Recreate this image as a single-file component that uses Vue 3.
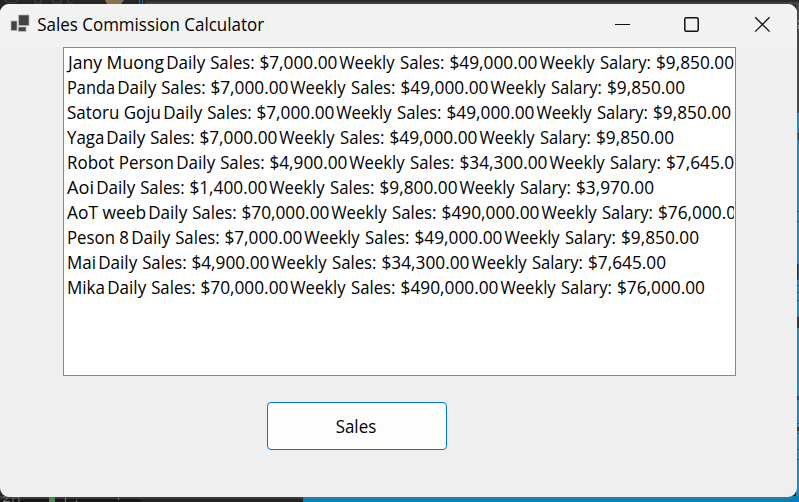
<script setup>
const people = [
  ['Jany Muong', 96, 166.2, '$7,000.00', '$49,000.00', '$9,850.00'],
  ['Panda', 48, 117.2, '$7,000.00', '$49,000.00', '$9,850.00'],
  ['Satoru Goju', 94, 163.2, '$7,000.00', '$49,000.00', '$9,850.00'],
  ['Yaga', 37.3, 106.2, '$7,000.00', '$49,000.00', '$9,850.00'],
  ['Robot Person', 107, 176.2, '$4,900.00', '$34,300.00', '$7,645.00'],
  ['Aoi', 27, 96.2, '$1,400.00', '$9,800.00', '$3,970.00'],
  ['AoT weeb', 79, 148.2, '$70,000.00', '$490,000.00', '$76,000.00'],
  ['Peson 8', 62, 131.2, '$7,000.00', '$49,000.00', '$9,850.00'],
  ['Mai', 29, 98.2, '$4,900.00', '$34,300.00', '$7,645.00'],
  ['Mika', 38, 107.2, '$70,000.00', '$490,000.00', '$76,000.00'],
]

const LEFT = 64
const amountWidth = (s) => (s.length - 2) * 10 + 8

const rows = people.map(([name, width, tab, daily, weekly, salary]) => {
  const a = tab - LEFT
  const b = a + 93.2 + amountWidth(daily) + 1.8
  const c = b + 110.3 + amountWidth(weekly) + 1.9
  return [
    { t: name, x: name[0] === 'J' ? 4 : 3, w: width },
    { t: 'Daily', x: a, w: 39 },
    { t: 'Sales:', x: a + 44, w: 44.5 },
    { t: daily, x: a + 93.2, w: amountWidth(daily) },
    { t: 'Weekly', x: b, w: 55.3 },
    { t: 'Sales:', x: b + 60.8, w: 44.5 },
    { t: weekly, x: b + 110.3, w: amountWidth(weekly) },
    { t: 'Weekly', x: c, w: 55.3 },
    { t: 'Salary:', x: c + 60.5, w: 51 },
    { t: salary, x: c + 116.6, w: amountWidth(salary) },
  ]
})
</script>

<template>
  <div class="desktop">
    <svg class="backdrop" width="799" height="502" viewBox="0 0 799 502">
      <rect width="799" height="502" fill="#252525" />
      <path d="M4 0q8 6 15 0M35 0v3h6V0M53 0v3h8V0M68 0v3h5" fill="none" stroke="#454545" />
      <path d="M105 0h19l-3 4h-14z" fill="#83744f" />
      <path d="M139.500 0v4M142.500 0v4" stroke="#356b9c" />
      <rect x="145" width="654" height="2" fill="#2b2b2b" />
      <rect y="2" x="145" width="654" height="3" fill="#414141" />
      <rect x="796" y="4" width="3" height="109" fill="#484848" />
      <path d="M798.500 20v2M798.500 25v4" stroke="#999" />
      <rect x="796" y="113" width="3" height="389" fill="#2a86ae" />
      <path d="M798.500 133v7M798.500 317v10" stroke="#32424b" />
      <path d="M797 211.500h2M797 221.500h2M797 265.500h2M797 273.500h2M797 285.500h2M797 292.500h2M797 300.500h2M797 423.500h2M797 433.500h2M797 449.500h2M797 459.500h2" stroke="#27566c" />
      <path d="M797.500 264v16M798 317v11M797.500 396v4M798 427v4" stroke="#393332" stroke-width="2" />
      <rect y="496" width="141" height="6" fill="#171717" />
      <rect x="141" y="496" width="162" height="6" fill="#222" />
      <rect y="496" width="303" height="3" fill="#3a3a3a" />
      <path d="M3 497q6-2 5 1l-5 3.500h7M13 502v-4q3-3 6 0v4" fill="none" stroke="#777" />
      <rect x="49" y="497" width="6" height="5" fill="#438b43" />
      <path d="M65.500 497v5M118.500 497v3M76.500 500v2" stroke="#777" />
      <rect x="303" y="496" width="496" height="6" fill="#0082bd" />
      <rect x="303" y="496" width="490" height="3" fill="#257da3" />
    </svg>
    <main class="window">
      <header class="titlebar">
        <svg class="caption" width="300" height="43" viewBox="0 0 300 43">
          <g fill="#434343" stroke="#b5b5b5" stroke-width="0.700">
            <rect x="18.700" y="11" width="10.300" height="10.500" />
            <rect x="11" y="17" width="6" height="9.500" />
            <rect x="18.300" y="23" width="7.700" height="4.300" />
          </g>
          <text x="37.200" y="27" textLength="227" lengthAdjust="spacingAndGlyphs">Sales Commission Calculator</text>
        </svg>
        <svg class="controls" width="177" height="43" viewBox="0 0 177 43">
          <path d="M-5 20.500H10" stroke="#111" />
          <rect x="64.800" y="13.800" width="13.400" height="13.400" rx="1.500" fill="none" stroke="#111" stroke-width="1.500" />
          <path d="M135.200 13.200l14.400 14.400M149.600 13.200l-14.400 14.400" fill="none" stroke="#111" stroke-width="1.300" />
        </svg>
      </header>
      <section class="content">
        <div class="list">
          <svg v-for="(row, i) in rows" :key="i" class="row" width="670" height="25">
            <text v-for="(p, j) in row" :key="j" :x="p.x" y="19" :textLength="p.w" lengthAdjust="spacingAndGlyphs">{{ p.t }}</text>
          </svg>
        </div>
        <button class="sales">
          <svg width="178" height="46">
            <text x="67.700" y="30" textLength="40.500" lengthAdjust="spacingAndGlyphs">Sales</text>
          </svg>
        </button>
      </section>
    </main>
  </div>
</template>

<style>
body {
  margin: 0;
  overflow: hidden;
}
</style>

<style scoped>
.desktop {
  display: grid;
  width: 799px;
  height: 502px;
  overflow: hidden;
}
.backdrop,
.window {
  grid-area: 1 / 1;
}
.window {
  box-sizing: border-box;
  display: flex;
  flex-direction: column;
  width: 797px;
  height: 493px;
  margin-top: 4px;
  border-radius: 9px;
  overflow: hidden;
  background: #efefef;
  z-index: 1;
}
svg {
  display: block;
}
text {
  font-family: "Open Sans", "Noto Sans", sans-serif;
  font-size: 17.5px;
  fill: #000;
}
.titlebar {
  display: flex;
  justify-content: space-between;
  flex: none;
  height: 43px;
  background: #f2f2f2;
}
.controls {
  overflow: visible;
}
.content {
  display: flex;
  flex-direction: column;
  align-items: flex-start;
}
.list {
  box-sizing: border-box;
  width: 673px;
  height: 329px;
  margin-left: 63px;
  padding-top: 2px;
  border: 1px solid #828790;
  background: #fff;
  overflow: hidden;
}
.row {
  overflow: hidden;
}
.sales {
  box-sizing: border-box;
  width: 180px;
  height: 48px;
  margin: 26px 0 0 267px;
  padding: 0;
  border: 1px solid #0078d4;
  border-radius: 4px;
  background: #fdfdfd;
}
</style>
